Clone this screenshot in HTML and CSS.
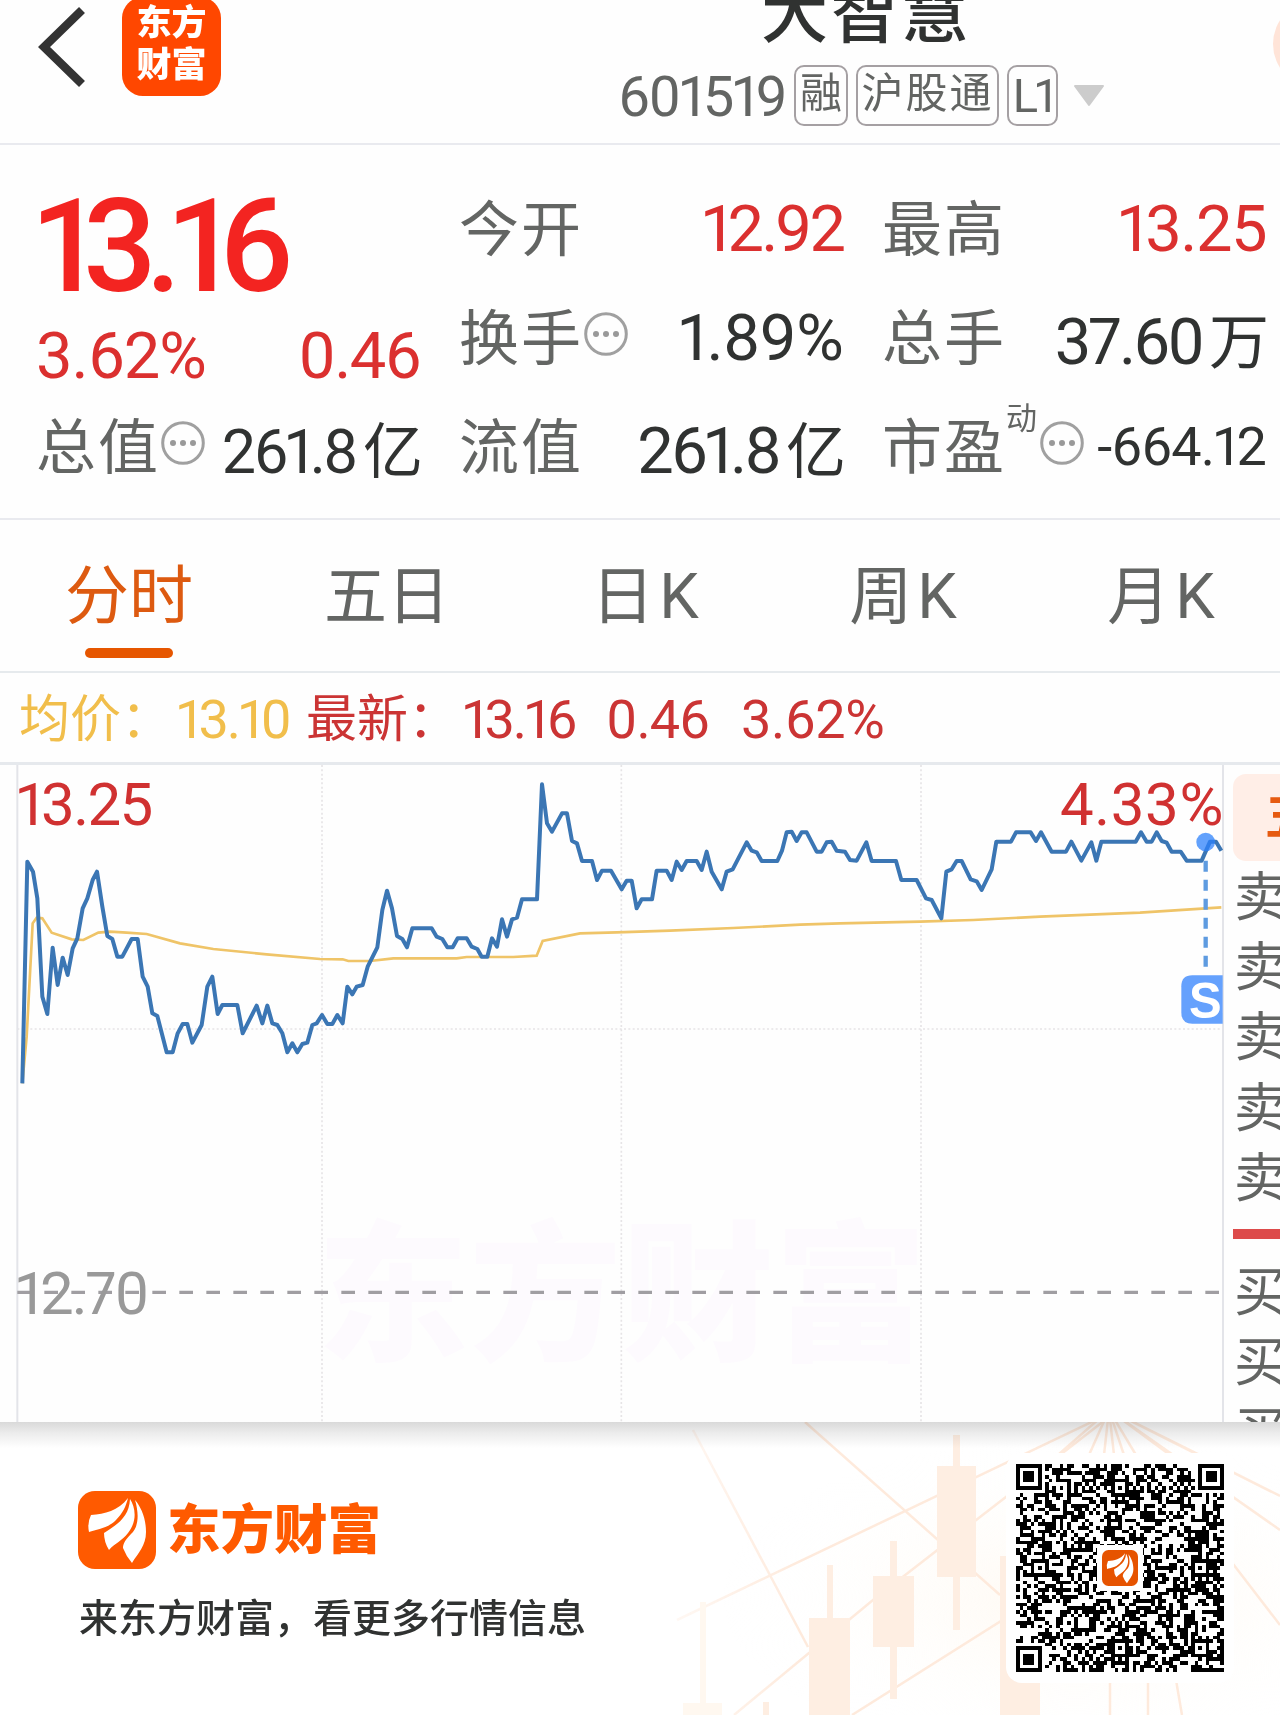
FILE: index.html
```html
<!DOCTYPE html>
<html lang="zh-CN">
<head>
  <meta charset="UTF-8">
  <meta name="viewport" content="width=device-width, initial-scale=1.0">
  <title>大智慧 601519</title>
  <link rel="stylesheet" href="styles.css">
</head>
<body>

<!-- shared symbols -->
<svg class="defs" width="0" height="0">
  <symbol id="feather" viewBox="0 0 78 78">
    <path d="M50 7C40 20 27 23 13 24Q9 32 11 41C19 38 29 38 38 29C45 22 48 15 50 7Z"/>
    <path d="M52 8C51 26 40 33 26 42Q26 51 31 59C37 52 44 50 50 42C60 29 57 16 52 8Z"/>
    <path d="M57 9C61 22 61 36 53 43C47 49 45 53 45 57Q48 65 54 72C60 62 68 55 68 41C68 27 63 16 57 9Z"/>
  </symbol>
  <symbol id="more" viewBox="0 0 44 44">
    <circle cx="22" cy="22" r="20.3" fill="none" stroke="#a0a0a0" stroke-width="3"/>
    <circle cx="12" cy="22" r="3" fill="#999"/>
    <circle cx="22" cy="22" r="3" fill="#999"/>
    <circle cx="32" cy="22" r="3" fill="#999"/>
  </symbol>
</svg>

<header class="topbar">
  <svg class="back" width="48" height="82" viewBox="0 0 48 82"><path d="M44 4L6 41L44 78" fill="none" stroke="#333" stroke-width="8.5"/></svg>
  <div class="app-logo"><span>东方</span><span>财富</span></div>
  <div class="stock">
    <h1>大智慧</h1>
    <div class="stock-code">
      <span class="code">601519</span>
      <span class="badge rong">融</span>
      <span class="badge hgt">沪股通</span>
      <span class="badge l1">L1</span>
      <svg class="arrow" width="32" height="22" viewBox="0 0 32 22"><path d="M2 1H30L16 20Z" fill="#ccc" stroke="#ccc" stroke-width="2" stroke-linejoin="round"/></svg>
    </div>
  </div>
  <div class="side-btn"></div>
</header>

<section class="quote">
  <div class="col">
    <div class="price">13.16</div>
    <div class="row change red"><span class="num pct">3.62%</span><span class="num diff">0.46</span></div>
    <div class="row"><span class="label">总值</span><svg class="more" width="44" height="44"><use href="#more"/></svg><span class="num mid">261.8<i>亿</i></span></div>
  </div>
  <div class="col">
    <div class="row"><span class="label">今开</span><span class="num red open">12.92</span></div>
    <div class="row"><span class="label">换手</span><svg class="more" width="44" height="44"><use href="#more"/></svg><span class="num turnover">1.89%</span></div>
    <div class="row"><span class="label">流值</span><span class="num float">261.8<i>亿</i></span></div>
  </div>
  <div class="col">
    <div class="row"><span class="label">最高</span><span class="num red high">13.25</span></div>
    <div class="row"><span class="label">总手</span><span class="num volume">37.60<i>万</i></span></div>
    <div class="row"><span class="label">市盈</span><sup>动</sup><svg class="more" width="44" height="44"><use href="#more"/></svg><span class="num small">-664.12</span></div>
  </div>
</section>

<nav class="tabs">
  <a class="active">分时</a>
  <a>五日</a>
  <a>日<b>K</b></a>
  <a>周<b>K</b></a>
  <a>月<b>K</b></a>
</nav>

<div class="legend">
  <span class="avg-name">均价：</span><span class="avg-val">13.10</span>
  <span class="last-name">最新：</span><span class="last-val">13.16</span><span class="last-diff">0.46</span><span class="last-pct">3.62%</span>
</div>

<main class="board">
  <svg class="chart" width="1225" height="657" viewBox="0 15 3675 1971">
    <text class="watermark" x="950" y="1768" textLength="1830">东方财富</text>
    <g class="grid">
      <path d="M966 15V1990M1864 15V1990M2763 15V1990M52 807H3665"/>
    </g>
    <path class="frame" d="M52 6V1990M3669 6V1990"/>
    <path class="base" d="M52 1597H3662"/>
    <polyline class="avg" points="67,970 80,830 98,490 110,473 127,475 155,518 215,538 250,540 295,518 330,515 380,518 440,522 540,550 640,567 800,583 960,597 1028,598 1045,603 1110,603 1180,595 1370,595 1400,591 1540,591 1610,587 1628,543 1740,520 1850,517 2010,512 2200,504 2400,494 2520,490 2760,485 2920,480 3120,470 3420,458 3664,442"/>
    <polyline class="line" points="67,970 82,305 99,335 112,415 127,710 142,762 158,563 173,675 188,593 203,645 218,565 232,535 248,445 262,415 278,360 291,335 307,440 322,528 337,537 352,590 367,590 395,537 413,537 428,650 443,680 457,760 472,768 500,877 518,877 533,820 548,792 562,792 577,848 605,795 622,680 637,650 653,762 667,735 712,735 728,820 770,737 787,790 802,737 817,790 832,795 847,820 862,877 877,850 892,877 907,852 922,848 937,795 950,790 966,765 982,792 997,792 1012,765 1028,790 1042,680 1057,703 1070,680 1088,675 1103,620 1132,562 1147,450 1161,392 1176,445 1191,528 1207,537 1221,562 1237,505 1295,505 1310,530 1327,537 1342,562 1358,562 1373,535 1400,535 1415,560 1432,567 1445,590 1462,590 1476,535 1491,560 1506,478 1521,530 1536,478 1551,473 1566,418 1611,418 1626,73 1641,190 1656,215 1686,160 1701,160 1716,243 1731,250 1746,303 1776,303 1791,360 1806,332 1833,332 1865,388 1880,362 1895,362 1910,445 1925,418 1956,418 1970,332 2000,332 2015,360 2030,305 2045,330 2060,303 2090,303 2105,330 2120,275 2135,335 2165,388 2180,335 2198,328 2240,247 2255,272 2270,277 2285,303 2332,303 2346,272 2360,217 2375,215 2390,243 2405,217 2420,217 2450,275 2465,275 2480,247 2495,245 2510,272 2535,275 2550,300 2570,302 2599,247 2615,303 2688,303 2704,360 2750,360 2778,415 2795,420 2824,475 2839,335 2855,328 2870,303 2885,303 2912,358 2930,364 2945,390 2975,328 2989,245 3033,245 3048,217 3092,217 3108,243 3123,217 3155,275 3198,275 3214,245 3244,302 3274,247 3289,302 3304,245 3407,245 3423,217 3440,245 3455,245 3470,217 3485,243 3500,248 3515,275 3542,275 3560,302 3605,302 3630,245 3648,245 3664,272"/>
    <path class="marker-line" d="M3617 302V620"/>
    <circle class="marker-dot" cx="3617" cy="246" r="28"/>
    <path class="marker-box" d="M3668 646V791H3577Q3544 791 3544 758V679Q3544 646 3577 646Z"/>
    <text class="marker-text" x="3567" y="774" textLength="98" lengthAdjust="spacingAndGlyphs">S</text>
    <text class="axis up" x="50" y="195" textLength="410">13.25</text>
    <text class="axis up" x="3180" y="195" textLength="490">4.33%</text>
    <text class="axis flat" x="48" y="1662" textLength="400">12.70</text>
  </svg>
  <aside class="orders">
    <div class="orders-tab">五</div>
    <ul>
      <li>卖</li>
      <li>卖</li>
      <li>卖</li>
      <li>卖</li>
      <li>卖</li>
    </ul>
    <div class="ratio"></div>
    <ul>
      <li>买</li>
      <li>买</li>
      <li>买</li>
    </ul>
  </aside>
</main>

<footer class="share">
  <svg class="art" width="640" height="293" viewBox="640 1422 640 293">
    <defs>
      <radialGradient id="glow" cx="0.68" cy="0.6" r="0.55">
        <stop offset="0" stop-color="#fff9f1"/>
        <stop offset="1" stop-color="#fff" stop-opacity="0"/>
      </radialGradient>
      <linearGradient id="fade" gradientUnits="userSpaceOnUse" x1="670" y1="0" x2="800" y2="0">
        <stop offset="0" stop-color="#feeadc" stop-opacity="0.3"/>
        <stop offset="1" stop-color="#feeadc"/>
      </linearGradient>
    </defs>
    <rect x="640" y="1422" width="640" height="293" fill="url(#glow)"/>
    <g class="rays">
      <path d="M693 1430L808 1647M677 1620L1100 1418M805 1422L1000 1595M734 1715L873 1600L1109 1417M852 1715L1050 1590"/>
      <path d="M1109 1410L1058 1455M1109 1410L1089 1455M1109 1410L1104 1455M1109 1410L1114 1455M1109 1410L1124 1455M1109 1410L1136 1455M1109 1410L1170 1455M1109 1410L1200 1455M1109 1410L1280 1496M1109 1410L1280 1530M1230 1560L1280 1625M1110 1680V1715M1148 1680V1715M1176 1680L1182 1715"/>
    </g>
    <g class="candles">
      <path d="M953 1435H960V1466H976V1577H960V1630H953V1577H937V1466H953Z"/>
      <path d="M890 1541H897V1576H914V1647H897V1699H890V1647H873V1576H890Z"/>
      <path d="M827 1565H833V1618H850V1715H809V1618H827Z"/>
      <path d="M1000 1556H1007V1618H1040V1715H1000Z"/>
      <path d="M763 1702H769V1715H763Z"/>
      <path class="pale" d="M700 1602H706V1703H722V1715H683V1703H700Z"/>
    </g>
  </svg>
  <div class="brand">
    <div class="brand-name">
      <svg class="brand-logo" width="78" height="78" viewBox="0 0 78 78"><rect width="78" height="78" rx="17" fill="#ff5a00"/><use href="#feather" fill="#fff"/></svg>
      <strong>东方财富</strong>
    </div>
    <p>来东方财富，看更多行情信息</p>
  </div>
  <div class="qr-card">
    <svg id="qr" width="208" height="208" viewBox="0 0 57 57" shape-rendering="crispEdges"></svg>
    <div class="qr-logo"><svg width="36" height="36" viewBox="0 0 78 78"><rect width="78" height="78" rx="14" fill="#e65300"/><use href="#feather" fill="#fff"/></svg></div>
  </div>
</footer>

<script src="qr.js"></script>
</body>
</html>
```
FILE: styles.css
```css
* {
  box-sizing: border-box;
}
body {
  margin: 0;
  width: 1280px;
  height: 1715px;
  overflow: hidden;
  background: #fefefe;
  color: #303231;
  font-family: Roboto, "Noto Sans CJK SC", sans-serif;
  font-variant-numeric: proportional-nums;
}
.defs {
  position: absolute;
}

/* top bar */
.topbar {
  display: flex;
  height: 145px;
  border-bottom: 2px solid #e9eaef;
  overflow: hidden;
}
.topbar > * {
  flex: none;
}
.back {
  margin: 6px 0 0 38px;
}
.app-logo {
  display: flex;
  flex-direction: column;
  align-items: center;
  width: 99px;
  height: 99px;
  margin: -3px 0 0 36px;
  padding-top: 6px;
  border-radius: 21px;
  background: #ff4700;
  color: #fff;
  font-size: 35px;
  font-weight: 900;
  line-height: 42px;
}
.stock {
  width: 490px;
  margin-left: 397px;
}
.stock h1 {
  margin: -24px 0 0 143px;
  font-size: 67px;
  font-weight: 500;
  line-height: 76px;
  letter-spacing: 3px;
}
.stock-code {
  display: flex;
  align-items: center;
  height: 61px;
  margin-top: 13px;
  color: #636563;
}
.code {
  width: 176px;
  padding-top: 3px;
  font-size: 56px;
  letter-spacing: -1.4px;
}
.badge {
  display: flex;
  justify-content: center;
  align-items: center;
  height: 61px;
  margin-right: 8px;
  border: 2px solid #a5a0a3;
  border-radius: 10px;
  font-size: 42px;
  line-height: 50px;
  white-space: nowrap;
}
.rong {
  width: 54px;
  padding-bottom: 4px;
}
.hgt {
  width: 143px;
  padding-bottom: 4px;
  letter-spacing: 2px;
}
.l1 {
  width: 51px;
  font-size: 47px;
  letter-spacing: -3px;
}
.arrow {
  margin-left: 7px;
}
.side-btn {
  width: 88px;
  height: 88px;
  margin-left: 165px;
  border-radius: 50%;
  background: #ffe4d8;
}

/* quote numbers */
.quote {
  display: flex;
  gap: 41px;
  height: 375px;
  padding: 28px 13px 0 38px;
  border-bottom: 2px solid #e9eaef;
}
.col {
  flex: none;
  width: 382px;
}
.row {
  display: flex;
  align-items: center;
  height: 109px;
}
.price {
  height: 145px;
  margin-left: -3px;
  color: #f32421;
  font-size: 129px;
  font-weight: 500;
  line-height: 148px;
  letter-spacing: -11px;
}
.change {
  height: 73px;
}
.label {
  margin: -7px 0 0 -2px;
  color: #636563;
  font-size: 60px;
  letter-spacing: 2px;
  white-space: nowrap;
}
.num {
  margin-left: auto;
  padding-top: 2px;
  font-size: 65px;
  letter-spacing: -3px;
  white-space: nowrap;
}
.num i {
  margin: 0 -3px 0 7px;
  font-size: 60px;
  font-style: normal;
  letter-spacing: 0;
}
.num.pct {
  margin-left: -2px;
  letter-spacing: -1px;
}
.num.diff {
  letter-spacing: -1.7px;
}
.num.high {
  letter-spacing: -1.5px;
}
.num.turnover {
  letter-spacing: -0.8px;
}
.num.mid {
  font-size: 61px;
  letter-spacing: -2.6px;
}
.num.small {
  font-size: 54px;
  letter-spacing: -0.9px;
}
.red {
  color: #db302f;
}
.more {
  flex: none;
  margin: -5px 0 0 1px;
}
sup {
  align-self: flex-start;
  margin: 8px 3px 0 0;
  color: #636563;
  font-size: 31px;
  line-height: 40px;
}
sup + .more {
  margin-left: 0;
}

/* period tabs */
.tabs {
  display: grid;
  grid-template-columns: repeat(5, 258px);
  height: 153px;
  border-bottom: 2px solid #e6eaed;
  color: #636563;
  font-size: 63px;
}
.tabs a {
  display: flex;
  justify-content: center;
  height: 151px;
  line-height: 154px;
}
.tabs b {
  margin-left: 5px;
  font-weight: 400;
}
.tabs .active {
  flex-direction: column;
  align-items: center;
  justify-content: flex-start;
  color: #dd5a10;
  font-size: 64px;
}
.tabs .active::after {
  content: "";
  width: 88px;
  height: 10px;
  margin-top: -26px;
  border-radius: 5px;
  background: #e65600;
}

.legend {
  display: flex;
  height: 92px;
  padding-left: 19px;
  border-bottom: 3px solid #e6e9ed;
  color: #cb3434;
  font-size: 54px;
  line-height: 94px;
  letter-spacing: -2px;
  white-space: nowrap;
}
.avg-name, .avg-val {
  color: #f1be4b;
}
.avg-name, .last-name {
  font-size: 51px;
  letter-spacing: 0;
}
.avg-name {
  width: 158px;
}
.avg-val {
  width: 129px;
}
.last-name {
  width: 157px;
}
.last-val {
  width: 143px;
}
.last-diff {
  width: 135px;
  letter-spacing: -1px;
}
.last-pct {
  letter-spacing: -0.4px;
}

/* chart and order book */
.board {
  display: flex;
  height: 657px;
  overflow: hidden;
}
.chart {
  flex: none;
}
.watermark {
  fill: #fdfafe;
  font-size: 455px;
  font-weight: 900;
}
.grid {
  fill: none;
  stroke: #e6e4e6;
  stroke-width: 5;
  stroke-dasharray: 6 7;
}
.frame {
  fill: none;
  stroke: #e3e4e9;
  stroke-width: 6;
}
.base {
  stroke: #a09ea2;
  stroke-width: 10;
  stroke-dasharray: 41 40;
}
.avg {
  fill: none;
  stroke: #efc468;
  stroke-width: 8;
}
.line {
  fill: none;
  stroke: #3b76b4;
  stroke-width: 12;
  stroke-linejoin: round;
}
.marker-line {
  stroke: #5e9be0;
  stroke-width: 13;
  stroke-dasharray: 33 24;
}
.marker-dot {
  fill: #2e82fb;
  fill-opacity: 0.75;
}
.marker-box {
  fill: #65a1fd;
}
.marker-text {
  fill: #fff;
  font-family: "Liberation Sans", sans-serif;
  font-size: 150px;
  font-weight: 700;
}
.axis {
  font-size: 180px;
}
.up {
  fill: #d03131;
}
.flat {
  fill: #999;
}
.orders {
  width: 55px;
  padding: 9px 0 0 8px;
  overflow: hidden;
  color: #636563;
  white-space: nowrap;
}
.orders-tab {
  width: 130px;
  height: 87px;
  padding-left: 32px;
  border-radius: 13px;
  background: #ffeee7;
  color: #e65a10;
  font-size: 48px;
  font-weight: 700;
  line-height: 88px;
}
.orders ul {
  margin: 0;
  padding: 0 0 0 1px;
  list-style: none;
}
.orders li {
  height: 70.2px;
  font-size: 53px;
  line-height: 75px;
}
.ratio {
  height: 10px;
  margin: 17px 0;
  background: #dd4b4b;
}

/* share footer */
.share {
  position: relative;
  display: flex;
  justify-content: space-between;
  height: 293px;
  background: linear-gradient(#d9d9d9, #ececec 11px, #fff 26px);
}
.art {
  position: absolute;
  right: 0;
  top: 0;
  mix-blend-mode: multiply;
}
.rays {
  fill: none;
  stroke: url(#fade);
  stroke-width: 2.5;
}
.candles {
  fill: #feeee2;
}
.candles .pale {
  fill: #fff8f0;
}
.brand {
  padding: 68px 0 0 78px;
}
.brand-name {
  display: flex;
  align-items: center;
  gap: 11px;
  color: #ff5a00;
  font-size: 53.5px;
  line-height: 78px;
}
.brand-name strong {
  padding-top: 2px;
  font-weight: 900;
}
.brand p {
  margin: 20px 0 0 1px;
  font-size: 39px;
  font-weight: 500;
  line-height: 58px;
}
.qr-card {
  position: relative;
  display: flex;
  justify-content: center;
  align-items: center;
  width: 228px;
  height: 230px;
  margin: 31px 46px 0 0;
  border-radius: 16px;
  background: #fff;
}
.qr-logo {
  position: absolute;
  left: 91px;
  top: 92px;
  width: 46px;
  height: 46px;
  padding: 5px;
  background: #fff;
}
.qr-logo svg {
  display: block;
}
```
FILE: qr.js
```js
// 57x57 code: finder, timing and alignment patterns, the rest is filled from a seed
const N = 57;
const qr = document.getElementById('qr');
let seed = 601519;

function rand() {
  seed = (seed * 1103515245 + 12345) % 2147483648;
  return seed / 2147483648;
}

const cells = [];
for (let y = 0; y < N; y++) {
  cells.push([]);
  for (let x = 0; x < N; x++) cells[y].push(rand() < 0.5);
}

function rings(cx, cy, r, dark) {
  for (let y = -r; y <= r; y++) {
    for (let x = -r; x <= r; x++) {
      const row = cells[cy + y];
      if (!row || cx + x < 0 || cx + x >= N) continue;
      row[cx + x] = dark.includes(Math.max(Math.abs(x), Math.abs(y)));
    }
  }
}

for (let i = 8; i < N - 8; i++) {
  cells[6][i] = i % 2 === 0;
  cells[i][6] = i % 2 === 0;
}
[[28, 6], [6, 28], [28, 28], [50, 28], [28, 50], [50, 50]].forEach(p => rings(p[0], p[1], 2, [0, 2]));
[[3, 3], [53, 3], [3, 53]].forEach(p => rings(p[0], p[1], 4, [0, 1, 3]));

let d = '';
cells.forEach((row, y) => {
  row.forEach((on, x) => {
    if (on) d += `M${x} ${y}h1v1h-1z`;
  });
});
const path = document.createElementNS('http://www.w3.org/2000/svg', 'path');
path.setAttribute('d', d);
qr.appendChild(path);
```
